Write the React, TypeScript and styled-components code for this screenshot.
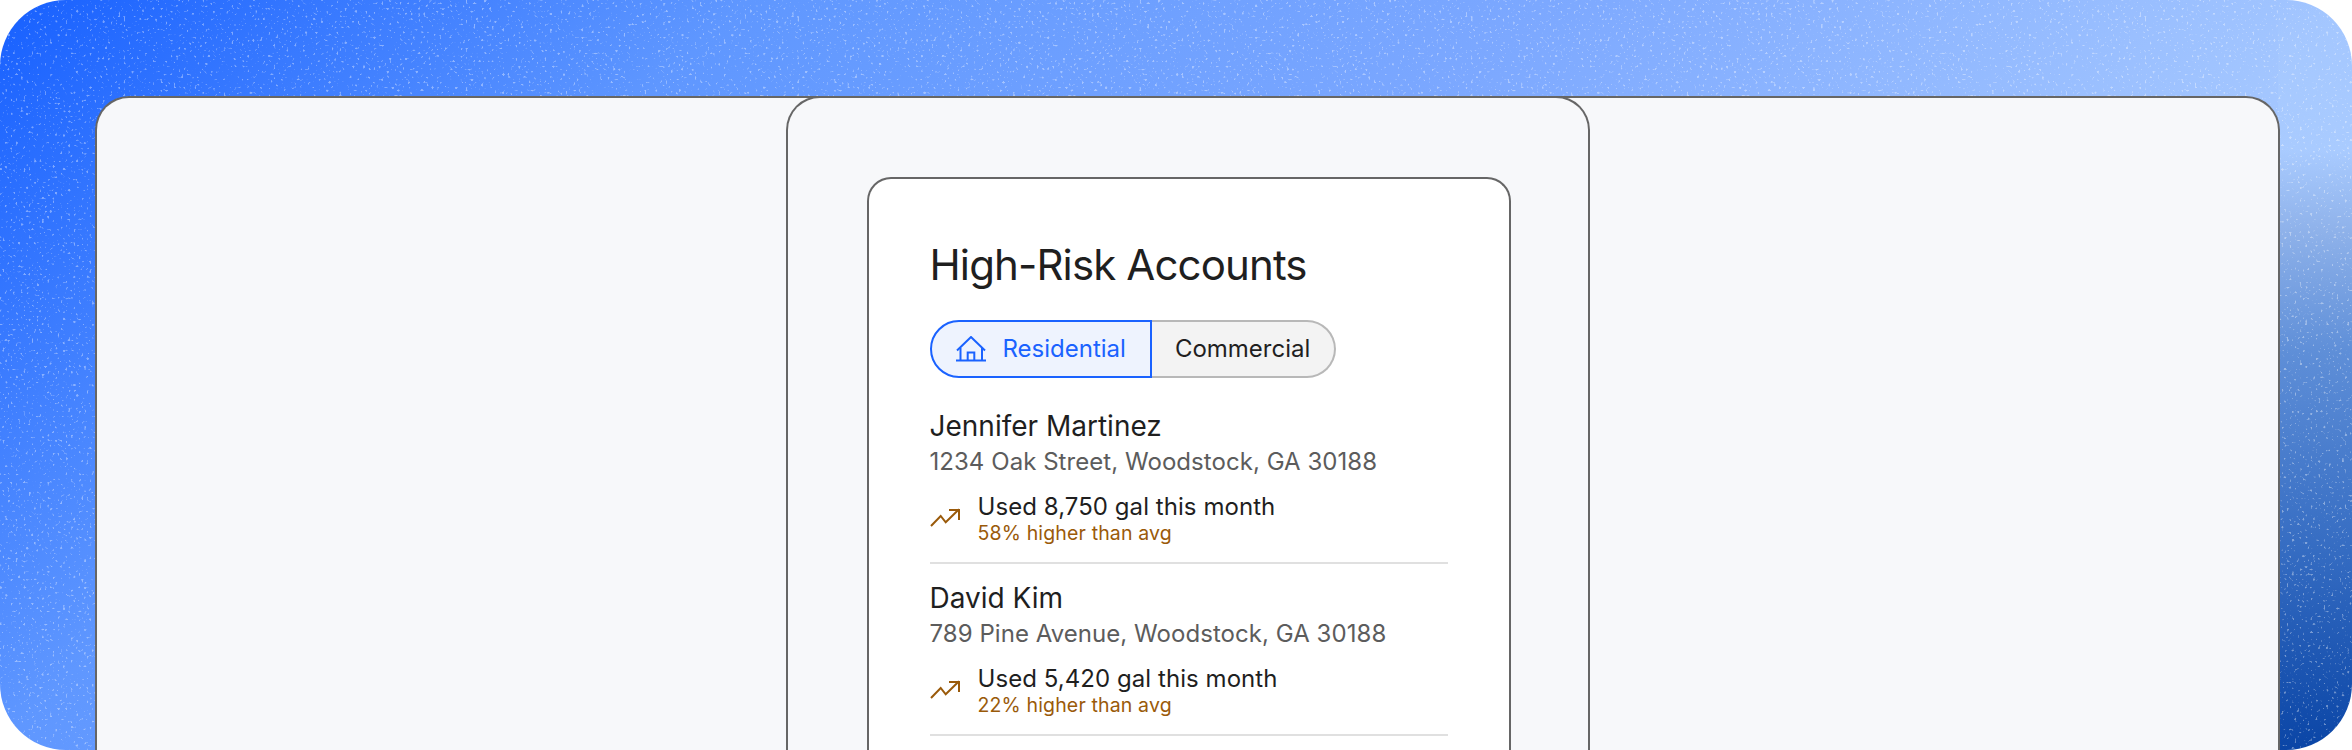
import React from "react";
import styled, { createGlobalStyle } from "styled-components";

const GlobalStyle = createGlobalStyle`
  html, body {
    margin: 0;
    padding: 0;
    background: #ffffff;
  }
  body {
    font-family: "Inter", "Liberation Sans", sans-serif;
    color: #1f1f1f;
  }
`;

const Frame = styled.div`
  position: relative;
  box-sizing: border-box;
  width: 2352px;
  height: 750px;
  display: flex;
  padding: 96px 72px 0 95px;
  border-radius: 66px;
  overflow: hidden;
  background:
    linear-gradient(
        to bottom,
        rgba(168, 203, 255, 0) 0,
        #a9cbff 150px,
        #8fb2ea 230px,
        #5f8fd8 350px,
        #356cc2 550px,
        #0a45a6 750px
      )
      right top / 74px 100% no-repeat,
    linear-gradient(135deg, #1760ff 0%, #5f97ff 24%, #7ca8ff 50%, #a3c6ff 76%);
`;

const Speckle = styled.svg`
  position: absolute;
  inset: 0;
  width: 100%;
  height: 100%;
  pointer-events: none;
`;

const OuterPanel = styled.div`
  position: relative;
  flex: 1;
  display: flex;
  justify-content: center;
  background: #f7f8fa;
  border: 2px solid #666666;
  border-bottom: none;
  border-radius: 34px 34px 0 0;
`;

const MiddlePanel = styled.div`
  display: flex;
  box-sizing: border-box;
  width: 804px;
  margin-top: -2px;
  padding: 79px 77px 0 79px;
  background: #f7f8fa;
  border: 2px solid #666666;
  border-bottom: none;
  border-radius: 34px 34px 0 0;
`;

const Card = styled.div`
  flex: 1;
  box-sizing: border-box;
  padding: 62.5px 61px 0 61px;
  background: #ffffff;
  border: 2px solid #666666;
  border-bottom: none;
  border-radius: 24px 24px 0 0;
`;

const Title = styled.h1`
  margin: 0 0 32.5px;
  font-size: 42px;
  line-height: 46px;
  font-weight: 400;
  letter-spacing: -0.87px;
  color: #1f1f1f;
`;

const Tabs = styled.div`
  display: inline-flex;
  height: 58px;
  margin-bottom: 30px;
  vertical-align: top;
`;

const Tab = styled.div<{ $active?: boolean }>`
  display: flex;
  align-items: center;
  box-sizing: border-box;
  gap: 17px;
  font-size: 24px;
  line-height: 30px;
  color: ${(props) => (props.$active ? "#1a62ff" : "#1f1f1f")};
  background: ${(props) => (props.$active ? "#eef3fe" : "#f3f3f3")};
  border: 2px solid ${(props) => (props.$active ? "#1a62ff" : "#b8b8b8")};
  border-left-width: ${(props) => (props.$active ? "2px" : "0")};
  border-radius: ${(props) =>
    props.$active ? "29px 0 0 29px" : "0 29px 29px 0"};
  padding: ${(props) => (props.$active ? "0 24px 0 24px" : "0 24px 0 23px")};
`;

const Account = styled.div`
  padding-bottom: 18px;
  margin-bottom: 15.75px;
  border-bottom: 2px solid #e0e0e0;
`;

const Name = styled.div`
  font-size: 28px;
  line-height: 36px;
  color: #1f1f1f;
`;

const Address = styled.div`
  margin-top: 0.75px;
  font-size: 24px;
  line-height: 34px;
  letter-spacing: 0.05px;
  color: #5c5c5c;
`;

const Usage = styled.div`
  display: flex;
  align-items: center;
  gap: 18px;
  margin-top: 13.5px;
`;

const UsageText = styled.div`
  display: flex;
  flex-direction: column;
`;

const Used = styled.div`
  font-size: 24px;
  line-height: 30px;
  letter-spacing: 0.06px;
  color: #1f1f1f;
`;

const Higher = styled.div`
  font-size: 19.5px;
  line-height: 22px;
  letter-spacing: 0.15px;
  color: #9a5a0a;
`;

function HouseIcon() {
  return (
    <svg width="30" height="26" viewBox="0 0 30 26" fill="none" stroke="currentColor" strokeWidth="2">
      <path d="M1 14.5 15 1l14 13.5" />
      <path d="M4.5 12v12.5M26 12v12.5" />
      <path d="M0 24.5h30" />
      <path d="M11.7 24.5v-8h6.6v8" />
    </svg>
  );
}

function TrendIcon() {
  return (
    <svg width="30" height="20" viewBox="0 0 30 20" fill="none" stroke="#9a5a0a" strokeWidth="2">
      <path d="M1 18 10.7 8l5 6.3L29 1.3" />
      <path d="M19 2h10v10" />
    </svg>
  );
}

const accounts = [
  {
    name: "Jennifer Martinez",
    address: "1234 Oak Street, Woodstock, GA 30188",
    used: "Used 8,750 gal this month",
    higher: "58% higher than avg",
  },
  {
    name: "David Kim",
    address: "789 Pine Avenue, Woodstock, GA 30188",
    used: "Used 5,420 gal this month",
    higher: "22% higher than avg",
  },
];

function App() {
  return (
    <>
      <GlobalStyle />
      <Frame>
        <Speckle aria-hidden="true">
          <filter id="grain" x="0" y="0" width="100%" height="100%">
            <feTurbulence type="fractalNoise" baseFrequency="0.38" numOctaves="1" seed="7" />
            <feColorMatrix
              type="matrix"
              values="0 0 0 0 1  0 0 0 0 1  0 0 0 0 1  10 0 0 0 -6.3"
            />
          </filter>
          <rect width="100%" height="100%" filter="url(#grain)" opacity="0.38" />
        </Speckle>
        <OuterPanel>
          <MiddlePanel>
            <Card>
              <Title>High-Risk Accounts</Title>
              <Tabs>
                <Tab $active>
                  <HouseIcon />
                  Residential
                </Tab>
                <Tab>Commercial</Tab>
              </Tabs>
              {accounts.map((account) => (
                <Account key={account.name}>
                  <Name>{account.name}</Name>
                  <Address>{account.address}</Address>
                  <Usage>
                    <TrendIcon />
                    <UsageText>
                      <Used>{account.used}</Used>
                      <Higher>{account.higher}</Higher>
                    </UsageText>
                  </Usage>
                </Account>
              ))}
            </Card>
          </MiddlePanel>
        </OuterPanel>
      </Frame>
    </>
  );
}

export default App;
